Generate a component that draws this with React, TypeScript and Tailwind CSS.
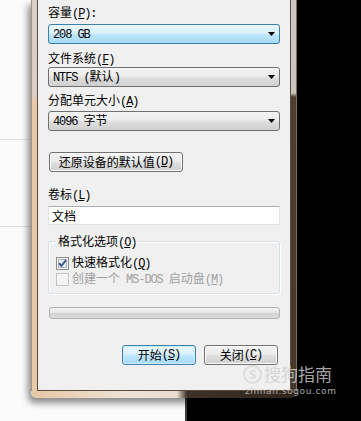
import React from 'react';

const mono = "font-['Liberation_Mono',monospace] text-[12px] tracking-[-1.1px]";

// "&X" marks the accelerator letter, ASCII runs get the narrow mono face
function Txt({ s }: { s: string }) {
  const parts: React.ReactNode[] = [];
  const re = /&(.)|([^&\u0080-\uffff]+)|([\u0080-\uffff]+)/g;
  let m: RegExpExecArray | null;
  let k = 0;
  while ((m = re.exec(s))) {
    if (m[1]) {
      parts.push(
        <span key={k++} className={`${mono} underline underline-offset-[1px]`}>
          {m[1]}
        </span>
      );
    } else if (m[2]) {
      parts.push(
        <span key={k++} className={`${mono} whitespace-pre`}>
          {m[2]}
        </span>
      );
    } else {
      parts.push(<span key={k++}>{m[3]}</span>);
    }
  }
  return <>{parts}</>;
}

const grayFace =
  'border-[#707070] bg-[linear-gradient(to_bottom,#f3f3f3_0%,#ececec_45%,#dedede_55%,#d0d0d0_100%)]';
const blueFace =
  'border-[#3c7fb1] bg-[linear-gradient(to_bottom,#eaf6fd_0%,#d9f0fc_45%,#bee6fd_55%,#a7d9f5_100%)]';

function Combo({ text, focus, className = '' }: { text: string; focus?: boolean; className?: string }) {
  return (
    <div
      className={`flex h-5 items-center justify-between rounded-[3px] border pl-[4px] pr-[4px] ${
        focus ? blueFace : grayFace
      } ${className}`}
    >
      <span className="leading-4">
        <Txt s={text} />
      </span>
      <svg width="7" height="4" viewBox="0 0 7 4">
        <path d="M0 0h7L3.5 4z" fill="#000" />
      </svg>
    </div>
  );
}

function Btn({ s, primary, className = '' }: { s: string; primary?: boolean; className?: string }) {
  return (
    <div
      className={`flex h-5 items-center justify-center rounded-[3px] border ${
        primary ? `${blueFace} shadow-[inset_0_0_0_1px_#cdeefd]` : `${grayFace} shadow-[inset_0_0_0_1px_#fcfcfc]`
      } ${className}`}
    >
      <Txt s={s} />
    </div>
  );
}

function Check({ checked, disabled }: { checked?: boolean; disabled?: boolean }) {
  return (
    <svg width="13" height="13" viewBox="0 0 13 13" className="shrink-0">
      <rect x="0.5" y="0.5" width="12" height="12" fill="#f4f4f4" stroke={disabled ? '#c4c4c4' : '#8e8f8f'} />
      {!disabled && <rect x="2.5" y="2.5" width="8" height="8" fill="#e9eef5" stroke="#aeb7c4" />}
      {checked && <path d="M3 6.2l2.4 2.6L10 3.2" fill="none" stroke="#3d5a93" strokeWidth="2" />}
    </svg>
  );
}

export default function App() {
  return (
    <div className="relative h-[421px] w-[361px] overflow-hidden font-['Noto_Sans_CJK_SC',sans-serif] text-[12px] leading-4 text-black">
      {/* desktop behind the dialog */}
      <div className="flex h-full">
        <div className="flex w-[185px] flex-col bg-[#fbfbfb]">
          <div className="h-[139px]" />
          <div className="h-[87px] border-t border-[#e0e0e0]" />
          <div className="border-t border-[#e0e0e0]" />
        </div>
        <div className="flex-1 border-l-2 border-[#3c3c3c] bg-black" />
      </div>

      {/* format dialog */}
      <div className="absolute left-[31px] top-0 flex h-[398px] w-[266px] flex-col overflow-hidden rounded-b-[6px] shadow-[-3px_5px_7px_rgba(0,0,0,0.45)]">
        <div className="flex h-[391px]">
          <div className="w-[6px] border-l border-[#a8927b] bg-[linear-gradient(to_bottom,#d8d1ca_0,#d9d0c7_95px,#e8c9a8_100px,#e8c9a8_100%)]" />
          <div className="flex w-[254px] flex-col border-x border-b border-[#5b4b3d] bg-[#f0f0f0] px-[10px]">
            <div className="mt-[4px] h-4">
              <Txt s="容量(&P):" />
            </div>
            <Combo focus text="208 GB" className="mt-[4px]" />
            <div className="mt-[6px] h-4">
              <Txt s="文件系统(&F)" />
            </div>
            <Combo text="NTFS (默认)" className="mt-[1px]" />
            <div className="mt-[5px] h-4">
              <Txt s="分配单元大小(&A)" />
            </div>
            <Combo text="4096 字节" className="mt-[3px]" />

            <Btn s="还原设备的默认值(&D)" className="ml-[1px] mt-[21px] w-[134px]" />

            <div className="mt-[14px] h-4">
              <Txt s="卷标(&L)" />
            </div>
            <div className="mt-[4px] flex h-[19px] items-center border border-[#dfe3e8] border-t-[#abadb3] bg-white pl-[3px]">
              文档
            </div>

            <fieldset className="mt-[8px] h-[61px] rounded-[3px] border border-[#d5dfe5] px-[7px] shadow-[inset_1px_1px_0_#fff,1px_1px_0_#fff]">
              <legend className="h-4 px-[2px]">
                <Txt s="格式化选项(&O)" />
              </legend>
              <div className="mt-[6px] flex h-4 items-center gap-[3px]">
                <Check checked />
                <span>
                  <Txt s="快速格式化(&Q)" />
                </span>
              </div>
              <div className="flex h-4 items-center gap-[3px] text-[#a0a0a0]">
                <Check disabled />
                <span>
                  <Txt s="创建一个 MS-DOS 启动盘(&M)" />
                </span>
              </div>
            </fieldset>

            <div className="ml-[1px] mt-[13px] h-[12px] rounded-[3px] border border-[#b2b2b2] bg-[linear-gradient(to_bottom,#f4f4f4_0%,#e4e4e4_50%,#d2d2d2_52%,#dcdcdc_100%)]" />

            <div className="mt-[26px] flex justify-end gap-[8px] pr-[2px]">
              <Btn primary s="开始(&S)" className="w-[74px]" />
              <Btn s="关闭(&C)" className="w-[74px]" />
            </div>
          </div>
          <div className="w-[6px] border-r border-[#7a6a5a] bg-[linear-gradient(to_bottom,#cec9c3_0,#cac4be_93px,#4d3f31_97px,#45382b_100%)]" />
        </div>
        <div className="h-[7px] bg-[linear-gradient(to_right,#e6c7a6_0,#efe3d6_100px,#e9dccf_146px,#3d3128_156px,#2e251d_100%)]" />
      </div>

      {/* watermark */}
      <div className="absolute left-[243px] top-[364px] flex flex-col items-start gap-[2px] opacity-80">
        <div className="flex h-5 items-center gap-[2px]">
          <div className="flex h-[19px] w-[19px] items-center justify-center rounded-full border-2 border-[#d8d8d8] text-[12px] font-bold leading-none text-[#d8d8d8]">
            S
          </div>
          <span className="text-[17px] leading-5 text-[#cfcfcf]">搜狗指南</span>
        </div>
        <span className="ml-[2px] font-['DejaVu_Sans',sans-serif] text-[9px] leading-[10px] tracking-[0.6px] text-[#cfcfcf]">
          zhinan.sogou.com
        </span>
      </div>
    </div>
  );
}
